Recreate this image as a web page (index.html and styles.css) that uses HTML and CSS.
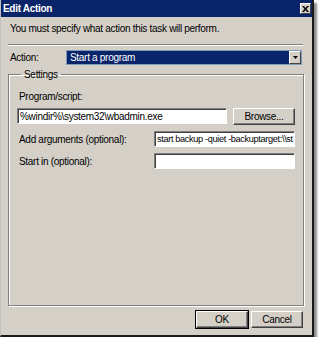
FILE: index.html
```html
<!DOCTYPE html>
<html lang="en">
<head>
    <meta charset="UTF-8">
    <title>Edit Action</title>
    <link rel="stylesheet" href="styles.css">
</head>
<body>
    <div class="window">
        <div class="titlebar">
            <span class="title">Edit Action</span>
            <span class="close">
                <svg width="7" height="6" viewBox="0 0 7 6"><path d="M0 0h2l1.5 2L5 0h2L4.5 3 7 6H5L3.5 4 2 6H0l2.5-3z" fill="#000"/></svg>
            </span>
        </div>

        <div class="content">
            <p class="intro">You must specify what action this task will perform.</p>
            <div class="separator"></div>

            <div class="action-row">
                <label>Action:</label>
                <div class="select">
                    <span class="select-value">Start a program</span>
                    <span class="select-btn">
                        <svg width="5" height="3" viewBox="0 0 5 3"><path d="M0 0h5L2.5 3z" fill="#000"/></svg>
                    </span>
                </div>
            </div>

            <fieldset class="settings">
                <legend>Settings</legend>
                <div class="field-label">Program/script:</div>
                <div class="program-row">
                    <div class="input wide">%windir%\system32\wbadmin.exe</div>
                    <button class="btn">Browse...</button>
                </div>
                <div class="arg-row">
                    <label>Add arguments (optional):</label>
                    <div class="input short args">start backup -quiet -backuptarget:\\st</div>
                </div>
                <div class="arg-row">
                    <label>Start in (optional):</label>
                    <div class="input short"></div>
                </div>
            </fieldset>

            <div class="buttons">
                <button class="btn default">OK</button>
                <button class="btn">Cancel</button>
            </div>
        </div>
    </div>
</body>
</html>
```

FILE: styles.css
```css
body {
    margin: 0;
    background: #fff;
    font-family: 'Liberation Sans', Arial, sans-serif;
    font-size: 10px;
    letter-spacing: -0.3px;
    color: #000;
}

.window {
    width: 311px;
    height: 335px;
    background: #d4d0c8;
    border-left: 1px solid #c0c0c0;
    border-right: 2px solid #1a1a1a;
    border-bottom: 2px solid #1a1a1a;
    box-shadow: 3px 3px 2px rgba(0, 0, 0, 0.45);
    display: flex;
    flex-direction: column;
}

.titlebar {
    height: 17px;
    background: #0a246a;
    display: flex;
    align-items: center;
    justify-content: space-between;
    padding: 0 1px 0 2px;
}

.title {
    color: #fff;
    font-weight: bold;
}

.close {
    width: 9px;
    height: 9px;
    background: #d4d0c8;
    border: 1px solid;
    border-color: #fff #404040 #404040 #fff;
    display: flex;
    align-items: center;
    justify-content: center;
}

.content {
    flex: 1;
    padding: 0 8px 7px 7px;
    display: flex;
    flex-direction: column;
}

.intro {
    margin: 6px 0 0 2px;
    height: 13px;
}

.separator {
    margin-top: 8px;
    border-top: 1px solid #808080;
    border-bottom: 1px solid #fff;
    margin-right: 1px;
}

.action-row {
    margin-top: 4px;
    display: flex;
    align-items: center;
}

.action-row label {
    width: 56px;
    padding-left: 2px;
}

.select {
    flex: 1;
    height: 15px;
    margin-right: 2px;
    background: #0a246a;
    border: 1px solid #7f9db9;
    box-sizing: border-box;
    display: flex;
    align-items: center;
    justify-content: space-between;
}

.select-value {
    color: #fff;
    padding-left: 3px;
}

.select-btn {
    width: 12px;
    height: 13px;
    background: #d4d0c8;
    border: 1px solid;
    border-color: #fff #404040 #404040 #fff;
    box-sizing: border-box;
    display: flex;
    align-items: center;
    justify-content: center;
}

.settings {
    flex: 1;
    margin: 4px 0 0 0;
    padding: 0 8px;
    border: 1px solid #808080;
    box-shadow: inset 1px 1px 0 #fff, 1px 1px 0 #fff;
}

.settings legend {
    padding: 0 3px;
    margin-left: 4px;
}

.field-label {
    margin-top: 11px;
    padding-left: 2px;
}

.input {
    height: 16px;
    line-height: 15px;
    padding-left: 2px;
    background: #fff;
    border: 1px solid;
    border-color: #808080 #fff #fff #808080;
    box-shadow: inset 1px 1px 0 #404040;
    white-space: nowrap;
    overflow: hidden;
    box-sizing: border-box;
}

.program-row {
    margin-top: 6px;
    display: flex;
    gap: 6px;
}

.input.wide {
    width: 210px;
}

.input.short {
    width: 141px;
}

.input.args {
    font-size: 9.2px;
    letter-spacing: -0.35px;
}

.arg-row {
    margin-top: 6px;
    display: flex;
    justify-content: space-between;
    align-items: center;
}

.arg-row label {
    padding-left: 2px;
}

.btn {
    font-family: inherit;
    font-size: 10px;
    letter-spacing: inherit;
    width: 62px;
    height: 17px;
    padding: 0;
    background: #d4d0c8;
    border: 1px solid;
    border-color: #fff #404040 #404040 #fff;
    box-shadow: inset -1px -1px 0 #808080;
    color: #000;
}

.buttons {
    margin-top: 5px;
    display: flex;
    justify-content: flex-end;
    gap: 3px;
    padding-right: 1px;
}

.buttons .btn {
    width: 52px;
}

.btn.default {
    outline: 1px solid #000;
}
```
